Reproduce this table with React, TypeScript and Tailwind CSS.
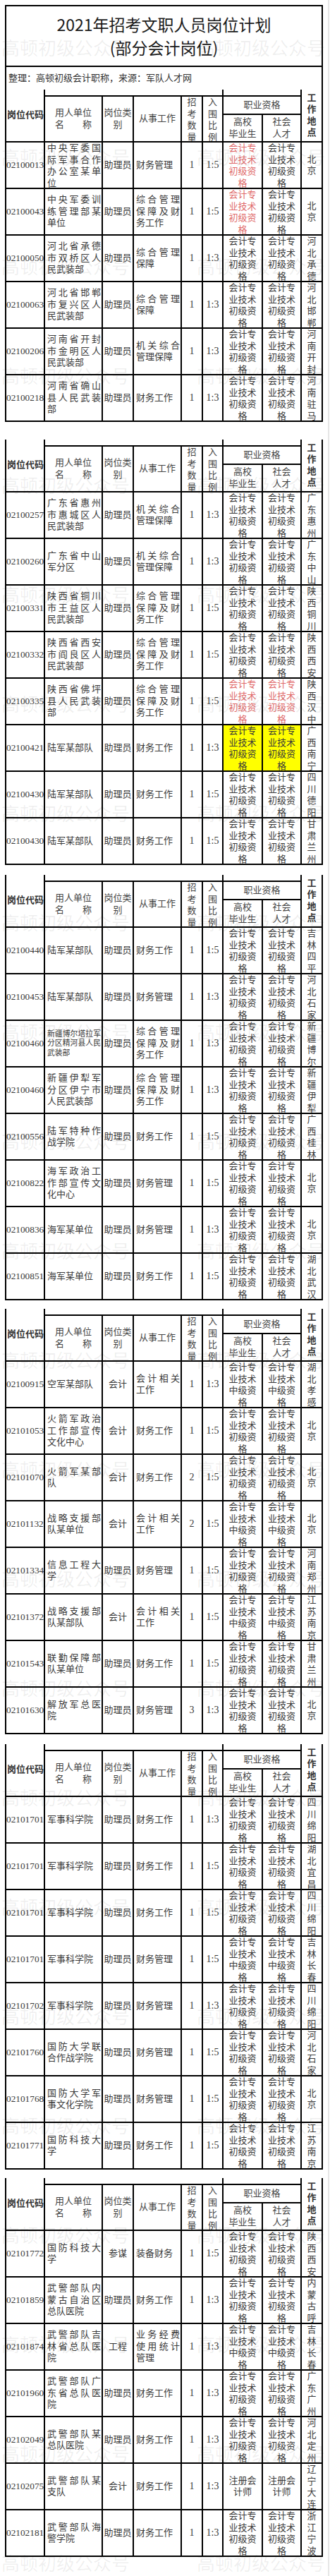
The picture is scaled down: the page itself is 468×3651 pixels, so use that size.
type Q = "c" | "z" | "r";

interface Row {
  code: string;
  unit: string;
  kind: string;
  work: string;
  num: string;
  ratio: string;
  q: Q;
  loc: string;
  red?: 1 | 2;
  yellow?: boolean;
  small?: boolean;
}

const QUAL: Record<Q, string[]> = {
  c: ["会计专", "业技术", "初级资", "格"],
  z: ["会计专", "业技术", "中级资", "格"],
  r: ["注册会", "计师"],
};

const t1: Row[] = [
  { code: "02100013", unit: "中央军委国际军事合作办公室某单位", kind: "助理员", work: "财务管理", num: "1", ratio: "1:5", q: "c", loc: "北京", red: 1 },
  { code: "02100043", unit: "中央军委训练管理部某单位", kind: "助理员", work: "综合管理保障及财务工作", num: "1", ratio: "1:5", q: "c", loc: "北京", red: 1 },
  { code: "02100050", unit: "河北省承德市双桥区人民武装部", kind: "助理员", work: "综合管理保障", num: "1", ratio: "1:3", q: "c", loc: "河北承德" },
  { code: "02100063", unit: "河北省邯郸市复兴区人民武装部", kind: "助理员", work: "综合管理保障", num: "1", ratio: "1:3", q: "c", loc: "河北邯郸" },
  { code: "02100206", unit: "河南省开封市金明区人民武装部", kind: "助理员", work: "机关综合管理保障", num: "1", ratio: "1:3", q: "c", loc: "河南开封" },
  { code: "02100218", unit: "河南省确山县人民武装部", kind: "助理员", work: "财务工作", num: "1", ratio: "1:3", q: "c", loc: "河南驻马" },
];

const t2: Row[] = [
  { code: "02100257", unit: "广东省惠州市惠城区人民武装部", kind: "助理员", work: "机关综合管理保障", num: "1", ratio: "1:3", q: "c", loc: "广东惠州" },
  { code: "02100260", unit: "广东省中山军分区", kind: "助理员", work: "机关综合管理保障", num: "1", ratio: "1:3", q: "c", loc: "广东中山" },
  { code: "02100331", unit: "陕西省铜川市王益区人民武装部", kind: "助理员", work: "综合管理保障及财务工作", num: "1", ratio: "1:5", q: "c", loc: "陕西铜川" },
  { code: "02100332", unit: "陕西省西安市阎良区人民武装部", kind: "助理员", work: "综合管理保障及财务工作", num: "1", ratio: "1:5", q: "c", loc: "陕西西安" },
  { code: "02100335", unit: "陕西省佛坪县人民武装部", kind: "助理员", work: "综合管理保障及财务工作", num: "1", ratio: "1:5", q: "c", loc: "陕西汉中", red: 2 },
  { code: "02100421", unit: "陆军某部队", kind: "助理员", work: "财务工作", num: "1", ratio: "1:3", q: "c", loc: "广西南宁", yellow: true },
  { code: "02100430", unit: "陆军某部队", kind: "助理员", work: "财务工作", num: "1", ratio: "1:5", q: "c", loc: "四川德阳" },
  { code: "02100430", unit: "陆军某部队", kind: "助理员", work: "财务工作", num: "1", ratio: "1:5", q: "c", loc: "甘肃兰州" },
];

const t3: Row[] = [
  { code: "02100440", unit: "陆军某部队", kind: "助理员", work: "财务工作", num: "1", ratio: "1:5", q: "c", loc: "吉林四平" },
  { code: "02100453", unit: "陆军某部队", kind: "助理员", work: "财务管理", num: "1", ratio: "1:3", q: "c", loc: "河北石家" },
  { code: "02100460", unit: "新疆博尔塔拉军分区精河县人民武装部", kind: "助理员", work: "综合管理保障及财务工作", num: "1", ratio: "1:3", q: "c", loc: "新疆博尔", small: true },
  { code: "02100460", unit: "新疆伊犁军分区伊宁市人民武装部", kind: "助理员", work: "综合管理保障及财务工作", num: "1", ratio: "1:3", q: "c", loc: "新疆伊犁" },
  { code: "02100556", unit: "陆军特种作战学院", kind: "助理员", work: "财务工作", num: "1", ratio: "1:5", q: "c", loc: "广西桂林" },
  { code: "02100822", unit: "海军政治工作部宣传文化中心", kind: "助理员", work: "财务管理", num: "1", ratio: "1:5", q: "c", loc: "北京" },
  { code: "02100836", unit: "海军某单位", kind: "助理员", work: "财务管理", num: "1", ratio: "1:3", q: "c", loc: "北京" },
  { code: "02100851", unit: "海军某单位", kind: "助理员", work: "财务工作", num: "1", ratio: "1:5", q: "c", loc: "湖北武汉" },
];

const t4: Row[] = [
  { code: "02100915", unit: "空军某部队", kind: "会计", work: "会计相关工作", num: "1", ratio: "1:3", q: "z", loc: "湖北孝感" },
  { code: "02101053", unit: "火箭军政治工作部宣传文化中心", kind: "会计", work: "财务工作", num: "1", ratio: "1:5", q: "c", loc: "北京" },
  { code: "02101070", unit: "火箭军某部队", kind: "会计", work: "财务工作", num: "2", ratio: "1:5", q: "c", loc: "北京" },
  { code: "02101132", unit: "战略支援部队某单位", kind: "会计", work: "会计相关工作", num: "2", ratio: "1:5", q: "z", loc: "北京" },
  { code: "02101334", unit: "信息工程大学", kind: "助理员", work: "财务管理", num: "1", ratio: "1:5", q: "c", loc: "河南郑州" },
  { code: "02101372", unit: "战略支援部队某部队", kind: "会计", work: "会计相关工作", num: "1", ratio: "1:5", q: "z", loc: "江苏南京" },
  { code: "02101543", unit: "联勤保障部队某单位", kind: "助理员", work: "财务工作", num: "1", ratio: "1:5", q: "c", loc: "甘肃兰州" },
  { code: "02101630", unit: "解放军总医院", kind: "助理员", work: "财务管理", num: "3", ratio: "1:3", q: "c", loc: "北京" },
];

const t5: Row[] = [
  { code: "02101701", unit: "军事科学院", kind: "助理员", work: "财务工作", num: "1", ratio: "1:3", q: "c", loc: "四川绵阳" },
  { code: "02101701", unit: "军事科学院", kind: "助理员", work: "财务工作", num: "1", ratio: "1:5", q: "c", loc: "湖北宜昌" },
  { code: "02101701", unit: "军事科学院", kind: "助理员", work: "财务工作", num: "1", ratio: "1:5", q: "c", loc: "四川绵阳" },
  { code: "02101701", unit: "军事科学院", kind: "助理员", work: "财务管理", num: "1", ratio: "1:5", q: "z", loc: "吉林长春" },
  { code: "02101702", unit: "军事科学院", kind: "助理员", work: "财务管理", num: "1", ratio: "1:3", q: "c", loc: "四川绵阳" },
  { code: "02101760", unit: "国防大学联合作战学院", kind: "助理员", work: "财务管理", num: "1", ratio: "1:5", q: "c", loc: "河北石家" },
  { code: "02101768", unit: "国防大学军事文化学院", kind: "助理员", work: "财务管理", num: "1", ratio: "1:5", q: "c", loc: "北京" },
  { code: "02101771", unit: "国防科技大学", kind: "助理员", work: "财务工作", num: "1", ratio: "1:5", q: "c", loc: "江苏南京" },
];

const t6: Row[] = [
  { code: "02101772", unit: "国防科技大学", kind: "参谋", work: "装备财务", num: "1", ratio: "1:5", q: "c", loc: "陕西西安" },
  { code: "02101859", unit: "武警部队内蒙古自治区总队医院", kind: "助理员", work: "财务工作", num: "1", ratio: "1:3", q: "c", loc: "内蒙古呼" },
  { code: "02101874", unit: "武警部队吉林省总队医院", kind: "工程", work: "业务经费使用统计管理", num: "1", ratio: "1:3", q: "z", loc: "吉林长春" },
  { code: "02101960", unit: "武警部队广东省总队医院", kind: "助理员", work: "财务工作", num: "1", ratio: "1:3", q: "c", loc: "广东广州" },
  { code: "02102049", unit: "武警部队某总队医院", kind: "助理员", work: "财务工作", num: "1", ratio: "1:3", q: "c", loc: "河北定州" },
  { code: "02102075", unit: "武警部队某支队", kind: "会计", work: "财务工作", num: "1", ratio: "1:3", q: "r", loc: "辽宁大连" },
  { code: "02102181", unit: "武警部队海警学院", kind: "助理员", work: "财务工作", num: "1", ratio: "1:3", q: "c", loc: "浙江宁波" },
];

function Stack({ text }: { text: string }) {
  return (
    <>
      {[...text].map((ch, i) => (
        <span key={i} className="block">
          {ch}
        </span>
      ))}
    </>
  );
}

function Header() {
  return (
    <div className="flex h-[75px] border-b-2 border-black text-[13px] leading-[16.5px] text-[#444]">
      <div className="w-[55px] shrink-0 border-r-2 border-black flex items-center pl-[1px] font-bold text-[#333] whitespace-nowrap">
        岗位代码
      </div>
      <div className="w-[253px] shrink-0 border-r-2 border-black flex flex-col">
        <div className="h-[10px] shrink-0 border-b-2 border-black" />
        <div className="flex flex-1 min-h-0">
          <div className="w-[82px] shrink-0 border-r-2 border-black flex flex-col items-center justify-center text-center">
            <span>用人单位</span>
            <span>名　　称</span>
          </div>
          <div className="w-[44px] shrink-0 border-r-2 border-black flex items-center justify-center text-center">
            岗位类别
          </div>
          <div className="w-[68px] shrink-0 border-r-2 border-black flex items-center justify-center">从事工作</div>
          <div className="w-[30px] shrink-0 border-r-2 border-black flex flex-col items-center overflow-hidden">
            <Stack text="招考数量" />
          </div>
          <div className="w-[27px] shrink-0 flex flex-col items-center overflow-hidden">
            <Stack text="入围比例" />
          </div>
        </div>
      </div>
      <div className="w-[111px] shrink-0 border-r-2 border-black flex flex-col">
        <div className="h-[10px] shrink-0 border-b-2 border-black" />
        <div className="h-[26px] shrink-0 border-b-2 border-black flex items-center justify-center">职业资格</div>
        <div className="flex flex-1 min-h-0">
          <div className="w-[56px] shrink-0 border-r-2 border-black flex flex-col items-center justify-center">
            <span>高校</span>
            <span>毕业生</span>
          </div>
          <div className="flex-1 flex flex-col items-center justify-center">
            <span>社会</span>
            <span>人才</span>
          </div>
        </div>
      </div>
      <div className="w-[30px] shrink-0 border-r-2 border-black flex flex-col items-center justify-center font-bold text-[#333]">
        <Stack text="工作地点" />
      </div>
    </div>
  );
}

function Qual({ lines, width, red, yellow }: { lines: string[]; width: string; red: boolean; yellow: boolean }) {
  return (
    <div
      className={`${width} shrink-0 border-r-2 border-black flex flex-col items-center justify-center-safe overflow-hidden ${
        yellow ? "bg-[#ffff00]" : ""
      } ${red ? "text-[#e06a6a]" : ""}`}
    >
      {lines.map((l, i) => (
        <span key={i} className="block whitespace-nowrap">
          {l}
        </span>
      ))}
    </div>
  );
}

function DataRow({ r }: { r: Row }) {
  const lines = QUAL[r.q];
  return (
    <div className="flex h-[66px] border-b-2 border-black text-[13px] leading-[16.5px]">
      <div className="w-[55px] shrink-0 border-r-2 border-black flex items-center overflow-hidden whitespace-nowrap text-[13.3px]">
        {r.code}
      </div>
      <div className="w-[82px] shrink-0 border-r-2 border-black flex flex-col justify-center-safe overflow-hidden pl-[3px] pr-[1px]">
        <p className={r.small ? "text-justify text-[10.8px] leading-[13.5px]" : "text-justify"}>{r.unit}</p>
      </div>
      <div className="w-[44px] shrink-0 border-r-2 border-black flex items-center justify-center whitespace-nowrap">
        {r.kind}
      </div>
      <div className="w-[68px] shrink-0 border-r-2 border-black flex flex-col justify-center-safe overflow-hidden pl-[3px] pr-[1px]">
        <p className="text-justify">{r.work}</p>
      </div>
      <div className="w-[30px] shrink-0 border-r-2 border-black flex items-center justify-center text-[14px]">{r.num}</div>
      <div className="w-[29px] shrink-0 border-r-2 border-black flex items-center justify-center text-[14px]">{r.ratio}</div>
      <Qual lines={lines} width="w-[56px]" red={!!r.red} yellow={!!r.yellow} />
      <Qual lines={lines} width="w-[55px]" red={r.red === 2} yellow={!!r.yellow} />
      <div className="w-[30px] shrink-0 border-r-2 border-black flex flex-col items-center justify-center-safe overflow-hidden">
        <Stack text={r.loc} />
      </div>
    </div>
  );
}

function Table({ rows, first, gap }: { rows: Row[]; first?: boolean; gap?: string }) {
  return (
    <div className={`w-[451px] border-l-2 border-black ${gap ?? ""}`}>
      {first && (
        <>
          <div className="h-[88px] border-y-2 border-r-2 border-black flex flex-col items-center justify-center font-['Noto_Sans_CJK_SC',sans-serif] text-[23px] leading-[33px] text-[#1a1a1a]">
            <div>2021年招考文职人员岗位计划</div>
            <div>(部分会计岗位)</div>
          </div>
          <div className="h-[32px] border-r-2 border-black flex items-center pl-[3px] text-[13px] text-[#333]">
            整理：高顿初级会计职称，来源：军队人才网
          </div>
        </>
      )}
      <Header />
      {rows.map((r, i) => (
        <DataRow key={i} r={r} />
      ))}
    </div>
  );
}

function Watermarks() {
  const rows = Array.from({ length: 24 }, (_, k) => 54 + k * 155);
  return (
    <div className="absolute inset-0 pointer-events-none font-['Noto_Sans_CJK_SC',sans-serif] text-[26px] leading-[26px] text-black/[0.07]">
      {rows.map((top, i) => (
        <div key={i}>
          <span className="absolute left-[2px] whitespace-nowrap" style={{ top }}>
            高顿初级公众号
          </span>
          <span className="absolute left-[279px] whitespace-nowrap" style={{ top }}>
            高顿初级公众号
          </span>
        </div>
      ))}
    </div>
  );
}

export default function App() {
  return (
    <div className="relative w-[467px] h-[3651px] overflow-hidden bg-white border-r-2 border-[#e6e6e6] pt-[7px] pl-[7px] font-['Liberation_Serif','Noto_Sans_CJK_SC',serif] text-[#3a3a3a]">
      <Table rows={t1} first />
      <Table rows={t2} gap="mt-[25px]" />
      <Table rows={t3} gap="mt-[14px]" />
      <Table rows={t4} gap="mt-[12px]" />
      <Table rows={t5} gap="mt-[14px]" />
      <Table rows={t6} gap="mt-[12px]" />
      <Watermarks />
    </div>
  );
}
